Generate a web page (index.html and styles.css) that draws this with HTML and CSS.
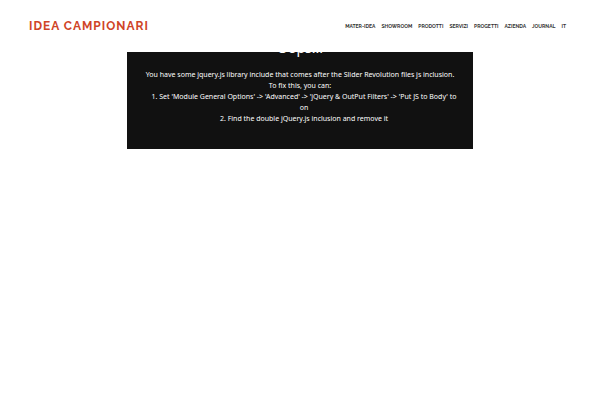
FILE: index.html
```
<!DOCTYPE html>
<html lang="it">
<head>
    <meta charset="UTF-8">
    <meta name="viewport" content="width=device-width, initial-scale=1.0">
    <title>Idea Campionari</title>
    <link rel="stylesheet" href="styles.css">
</head>
<body>

<header class="site-header">
    <a class="logo" href="#">IDEA CAMPIONARI</a>
    <nav class="main-nav">
        <a href="#">MATER-IDEA</a>
        <a href="#">SHOWROOM</a>
        <a href="#">PRODOTTI</a>
        <a href="#">SERVIZI</a>
        <a href="#">PROGETTI</a>
        <a href="#">AZIENDA</a>
        <a href="#">JOURNAL</a>
        <a href="#">IT</a>
    </nav>
</header>

<main>
    <div class="slider-error">
        <h1>Oops...</h1>
        <p>You have some jquery.js library include that comes after the Slider Revolution files js inclusion.</p>
        <p>To fix this, you can:</p>
        <ol>
            <li>Set 'Module General Options' -&gt; 'Advanced' -&gt; 'jQuery &amp; OutPut Filters' -&gt; 'Put JS to Body' to on</li>
            <li>Find the double jQuery.js inclusion and remove it</li>
        </ol>
    </div>
</main>

</body>
</html>
```
FILE: styles.css
```
* {
    box-sizing: border-box;
}
body {
    margin: 0;
    background: #fff;
    font-family: "Noto Sans", "Open Sans", sans-serif;
}
.site-header {
    position: sticky;
    top: 0;
    z-index: 10;
    display: flex;
    align-items: center;
    justify-content: space-between;
    height: 52px;
    padding: 0 34px 0 29px;
    background: #fff;
    font-family: Raleway, Lato, sans-serif;
}
.logo {
    color: #cf4427;
    font-size: 12px;
    font-weight: 700;
    letter-spacing: 1px;
    text-decoration: none;
}
.main-nav {
    display: flex;
    gap: 6px;
}
.main-nav a {
    color: #333;
    font-size: 5px;
    font-weight: 700;
    text-decoration: none;
}
/* the top of the message slides under the header */
.slider-error {
    width: 100%;
    max-width: 346px;
    margin: -20px auto 0;
    padding: 5px 14px 25px;
    background: #111;
    color: #fff;
    font-size: 7px;
    line-height: 11px;
    text-align: center;
}
.slider-error h1 {
    margin: 0 0 10px;
    font-size: 14px;
    font-weight: 400;
    line-height: 22px;
}
.slider-error p {
    margin: 0;
}
.slider-error ol {
    margin: 0;
    padding-left: 8px;
    list-style-position: inside;
}
```
